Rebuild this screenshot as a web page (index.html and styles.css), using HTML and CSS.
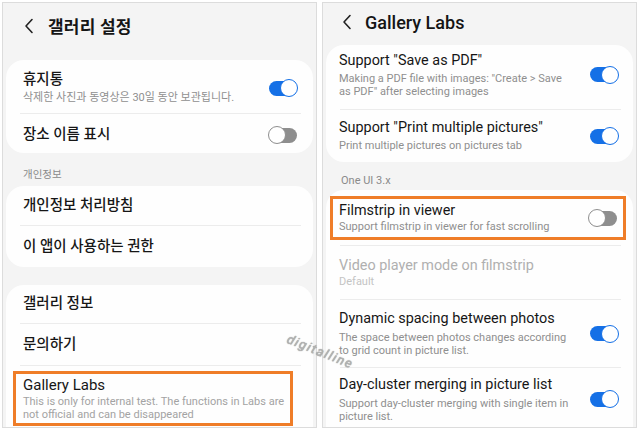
FILE: index.html
```html
<!DOCTYPE html>
<html lang="ko">
<head>
<meta charset="utf-8">
<link rel="stylesheet" href="styles.css">
</head>
<body>
<div class="wrap">
  <section class="panel left">
    <header class="head">
      <svg class="back" width="10" height="16" viewBox="0 0 10 16"><path d="M8 1.5 L2 8 L8 14.5" fill="none" stroke="#222" stroke-width="1.6" stroke-linecap="round" stroke-linejoin="round"/></svg>
      <h1 class="title ko">갤러리 설정</h1>
    </header>
    <div class="card c1">
      <div class="row r-trash">
        <div class="txt"><div class="t">휴지통</div><div class="s">삭제한 사진과 동영상은 30일 동안 보관됩니다.</div></div>
        <span class="tg on"></span>
      </div>
      <div class="div"></div>
      <div class="row r-place">
        <div class="txt"><div class="t">장소 이름 표시</div></div>
        <span class="tg off"></span>
      </div>
    </div>
    <div class="sec sec-l">개인정보</div>
    <div class="card c2">
      <div class="row r-40"><div class="txt"><div class="t">개인정보 처리방침</div></div></div>
      <div class="div"></div>
      <div class="row r-41"><div class="txt"><div class="t">이 앱이 사용하는 권한</div></div></div>
    </div>
    <div class="card c3">
      <div class="row r-39"><div class="txt"><div class="t">갤러리 정보</div></div></div>
      <div class="div"></div>
      <div class="row r-42"><div class="txt"><div class="t">문의하기</div></div></div>
      <div class="div"></div>
      <div class="hl hl-l">
        <div class="txt"><div class="t">Gallery Labs</div><div class="s">This is only for internal test. The functions in Labs are<br>not official and can be disappeared</div></div>
      </div>
    </div>
  </section>

  <section class="panel right">
    <header class="head head-r">
      <svg class="back" width="10" height="16" viewBox="0 0 10 16"><path d="M8 1.5 L2 8 L8 14.5" fill="none" stroke="#222" stroke-width="1.6" stroke-linecap="round" stroke-linejoin="round"/></svg>
      <h1 class="title en">Gallery Labs</h1>
    </header>
    <div class="card rc1">
      <div class="row rr-pdf">
        <div class="txt"><div class="t">Support "Save as PDF"</div><div class="s">Making a PDF file with images: "Create &gt; Save<br>as PDF" after selecting images</div></div>
        <span class="tg on"></span>
      </div>
      <div class="div"></div>
      <div class="row rr-print">
        <div class="txt"><div class="t">Support "Print multiple pictures"</div><div class="s">Print multiple pictures on pictures tab</div></div>
        <span class="tg on"></span>
      </div>
    </div>
    <div class="sec sec-r">One UI 3.x</div>
    <div class="card rc2">
      <div class="hl hl-r">
        <div class="txt"><div class="t">Filmstrip in viewer</div><div class="s">Support filmstrip in viewer for fast scrolling</div></div>
        <span class="tg off"></span>
      </div>
      <div class="div"></div>
      <div class="row rr-video">
        <div class="txt"><div class="t dis">Video player mode on filmstrip</div><div class="s dis2">Default</div></div>
      </div>
      <div class="div"></div>
      <div class="row rr-dyn">
        <div class="txt"><div class="t">Dynamic spacing between photos</div><div class="s">The space between photos changes according<br>to grid count in picture list.</div></div>
        <span class="tg on"></span>
      </div>
      <div class="div"></div>
      <div class="row rr-day">
        <div class="txt"><div class="t">Day-cluster merging in picture list</div><div class="s">Support day-cluster merging with single item in<br>picture list.</div></div>
        <span class="tg on"></span>
      </div>
    </div>
  </section>
  <div class="wm">digitalline</div>
</div>
</body>
</html>
```

FILE: styles.css
```css
* { box-sizing: border-box; margin: 0; padding: 0; }
html, body { width: 640px; height: 430px; overflow: hidden; background: #fff; }
body { font-family: Roboto, "Noto Sans CJK KR", sans-serif; color: #151515; }
.wrap { position: relative; display: flex; gap: 5px; padding: 2px 3px 0 2px; height: 430px; }
.panel { width: 315px; height: 426px; background: #f4f4f4; border: 1px solid #dcdcdc; overflow: hidden; display: flex; flex-direction: column; }
.panel > * { flex-shrink: 0; }
.head { height: 57px; display: flex; align-items: center; padding: 0 0 12px 21px; gap: 14px; }
.head-r { height: 42px; padding: 0 0 4px 19px; gap: 13px; }
.back { flex: none; }
.title { font-weight: 700; font-size: 17px; letter-spacing: 0.2px; }
.title.en { font-weight: 500; font-size: 18px; letter-spacing: 0; }
.card { background: #fefefe; border-radius: 18px; margin: 0 3px; }
.row { display: flex; align-items: center; justify-content: space-between; }
.left .row { padding: 0 16px 0 17px; }
.right .row { padding: 0 15px 0 13px; }
.txt { min-width: 0; }
.t { font-size: 14.4px; line-height: 18px; font-weight: 400; color: #161616; }
.left .t { font-size: 14.5px; font-weight: 500; }
.s { font-size: 11px; line-height: 12.5px; color: #8f8f8f; margin-top: 3px; white-space: nowrap; }
.div { height: 1px; background: #ececec; margin: 0 12px 0 14px; }
.dis { color: #b0b0b0; }
.dis2 { color: #c4c4c4; }

.left .r-trash { height: 53px; padding-top: 3px; }
.left .r-place { height: 39px; padding-top: 3px; }
.sec { font-size: 10.5px; color: #8a8a8a; }
.sec-l { height: 33px; padding: 13px 0 0 20px; }
.r-40 { height: 39px; }
.r-41 { height: 41px; }
.c3 { margin-top: 18px; flex: 1 0 auto; border-radius: 18px 18px 0 0; }
.r-39 { height: 38px; }
.r-42 { height: 41px; }

.hl { border: 3px solid #ef7d28; display: flex; align-items: center; justify-content: space-between; }
.hl-l { margin: 5px 20px 0 7px; height: 55px; padding: 0 4px 0 7px; }
.hl-l .t { font-weight: 400; font-size: 15px; }
.hl-l .s { color: #a3a3a3; line-height: 12.5px; margin-top: 2px; }
.hl-r { margin: 6px 7px 5px 4px; height: 44px; padding: 0 6px 0 6px; }
.hl-r .s { margin-top: 1px; }

.right .rr-pdf { height: 64px; align-items: flex-start; padding-top: 7px; }
.rr-pdf .tg { margin-top: 15px; }
.rr-print { height: 52px; }
.sec-r { height: 28px; padding: 12px 0 0 18px; font-size: 11px; }
.rc2 { flex: 1 0 auto; border-radius: 18px 18px 0 0; }
.right .rr-video { height: 53px; padding-top: 1px; }
.rr-video .s { margin-top: 1px; }
.rr-dyn { height: 67px; }
.rr-dyn .s, .rr-day .s { line-height: 13px; }
.rr-day { height: 62px; }

.tg { flex: none; position: relative; width: 28px; height: 15px; border-radius: 8px; }
.tg::after { content: ""; position: absolute; top: -1.5px; width: 18px; height: 18px; border-radius: 50%; background: #fff; box-sizing: border-box; }
.tg.on { background: #1570e6; }
.tg.on::after { right: -1px; border: 1.5px solid #1570e6; }
.tg.off { background: #8e8e8e; }
.tg.off::after { left: -1px; border: 1.5px solid #8e8e8e; }

.wm { position: absolute; left: 285px; top: 344px; font-size: 13px; font-style: italic; font-weight: 400; color: #b4b4b4; letter-spacing: 1.5px; transform: rotate(22deg); text-shadow: 0 0 1px #777; font-family: Roboto, sans-serif; }
```
